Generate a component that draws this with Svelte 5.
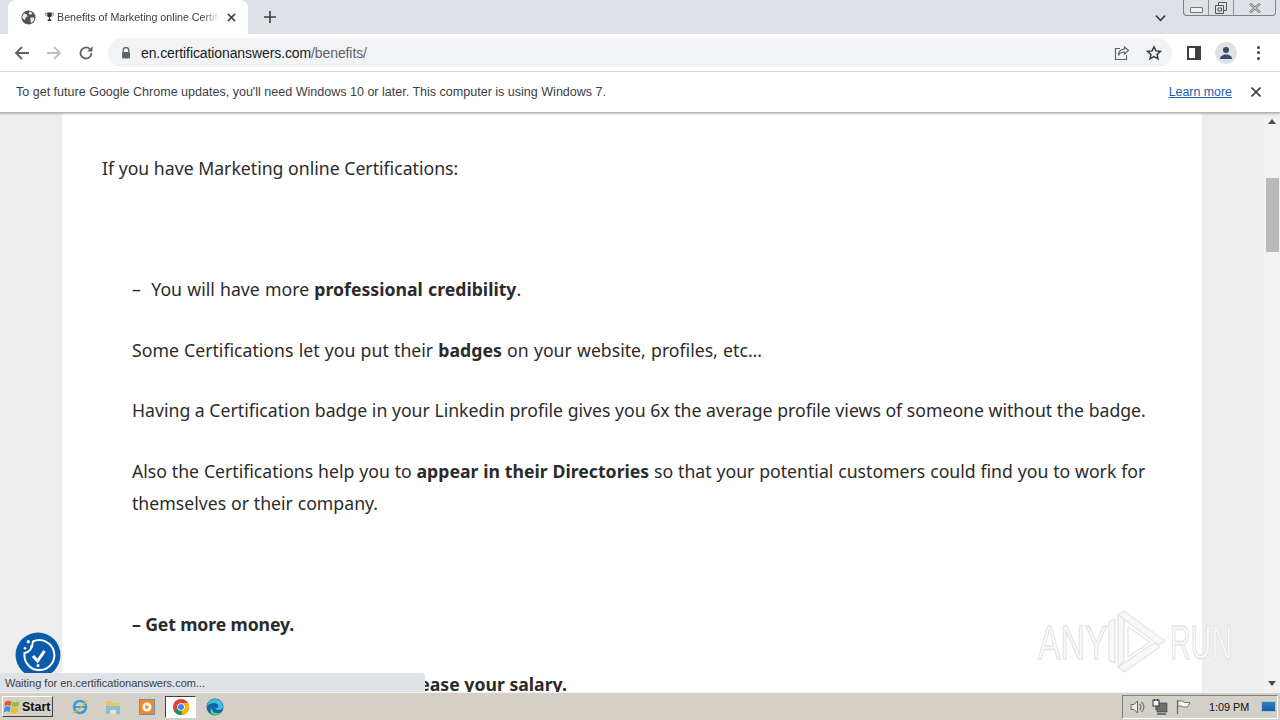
<script>
  const paragraphs = [
    { id: "intro", html: "If you have Marketing online Certifications:" },
    { id: "gap1", html: "&nbsp;" },
    { id: "p1", indent: true, space: "wide", html: "–&nbsp; You will have more <strong>professional credibility</strong>." },
    { id: "p2", indent: true, space: "wide", html: "Some Certifications let you put their <strong>badges</strong> on your website, profiles, etc…" },
    { id: "p3", indent: true, html: "Having a Certification badge in your Linkedin profile gives you 6x the average profile views of someone without the badge." },
    { id: "p4", indent: true, space: "slight", html: "Also the Certifications help you to <strong>appear in their Directories</strong> so that your potential customers could find you to work for themselves or their company." },
    { id: "gap2", html: "&nbsp;" },
    { id: "p5", indent: true, space: "narrow", html: "<strong>– Get more money.</strong>" },
    { id: "p6", indent: true, html: "<strong>Certification can help you to increase your salary.</strong>" },
  ];
</script>

<div class="screen">
  <header class="tabstrip">
    <div class="tab">
      <svg class="globe" viewBox="0 0 16 16" width="15" height="15">
        <circle cx="8" cy="8" r="7.5" fill="#4f5256" />
        <path d="M3 3.5l3 1 1 2.5-2 1-1 3-3-3zM9 1.5l3 1.5-1 2-3-1zM10 8l4 0 0 3-3 3-1-3z" fill="#e9ebef" />
      </svg>
      <svg class="trophy" viewBox="0 0 10 11" width="9" height="10">
        <path d="M2.500.5h5v3.500L6 6H4L2.500 4z" fill="#333" />
        <path d="M2.500 1.500H.5c0 2 1 3 2.500 3M7.500 1.500h2c0 2-1 3-2.500 3" fill="none" stroke="#555" stroke-width=".8" />
        <path d="M4.500 6h1v2h1.500v2H3V8h1.500z" fill="#333" />
      </svg>
      <span class="tab-title">Benefits of Marketing online Certifi</span>
      <svg class="tab-close" viewBox="0 0 10 10" width="9" height="9">
        <path d="M1 1l8 8M9 1l-8 8" stroke="#3c4043" stroke-width="1.7" />
      </svg>
    </div>
    <svg class="newtab" viewBox="0 0 12 12" width="12" height="12">
      <path d="M6 0v12M0 6h12" stroke="#3c4043" stroke-width="1.6" />
    </svg>
    <div class="strip-space"></div>
    <svg class="chevron" viewBox="0 0 12 8" width="11" height="8">
      <path d="M1 1.500l5 5 5-5" fill="none" stroke="#3c4043" stroke-width="1.800" />
    </svg>
    <div class="winctl">
      <div class="winbtn min"><i></i></div>
      <div class="winbtn restore">
        <svg viewBox="0 0 12 12" width="12" height="12">
          <path d="M3.500 3V.5h8v8H9M.5 3.500h8v8h-8zM3 6h3.500v3H3z" fill="none" stroke="#555" />
        </svg>
      </div>
      <div class="winbtn close">
        <svg viewBox="0 0 12 10" width="12" height="10">
          <path d="M1 .5l10 9M11 .5l-10 9" stroke="#777" stroke-width="2.400" />
          <path d="M1 .5l10 9M11 .5l-10 9" stroke="#eef0f3" stroke-width=".8" />
        </svg>
      </div>
    </div>
  </header>

  <nav class="toolbar">
    <svg viewBox="0 0 16 16" width="16" height="16">
      <path d="M15 8H2M8 2L2 8l6 6" fill="none" stroke="#5f6368" stroke-width="1.800" />
    </svg>
    <svg viewBox="0 0 16 16" width="16" height="16">
      <path d="M1 8h13M8 2l6 6-6 6" fill="none" stroke="#bcc0c4" stroke-width="1.800" />
    </svg>
    <svg viewBox="0 0 16 16" width="16" height="16">
      <path d="M13.500 8a5.500 5.500 0 1 1-1.600-3.900" fill="none" stroke="#5f6368" stroke-width="1.800" />
      <path d="M14.500 1.200v5.300H9.200z" fill="#5f6368" />
    </svg>
    <div class="omnibox">
      <svg viewBox="0 0 10 12" width="10" height="12">
        <path d="M2.200 5V3.400a2.800 2.800 0 0 1 5.600 0V5" fill="none" stroke="#5f6368" stroke-width="1.300" />
        <rect x="1" y="5" width="8" height="6.500" rx="1" fill="#5f6368" />
      </svg>
      <span class="url">en.certificationanswers.com<span class="path">/benefits/</span></span>
      <svg class="share" viewBox="0 0 16 16" width="16" height="16">
        <path d="M10.500 2l4 3.500-4 3.500V7C7 7 5.500 8.300 4.500 10.500 4.500 7 6.500 4 10.500 4zM6 3.500H1.500v11h11V10" fill="none" stroke="#5f6368" stroke-width="1.200" />
      </svg>
      <svg viewBox="0 0 16 16" width="16" height="16">
        <path d="M8 1.800l1.900 4.100 4.500.5-3.300 3 .9 4.400L8 11.600l-4 2.200.9-4.400-3.300-3 4.500-.5z" fill="none" stroke="#3c4043" stroke-width="1.500" />
      </svg>
    </div>
    <svg class="sidepanel" viewBox="0 0 14 14" width="14" height="14">
      <path d="M0 0h14v14H0zM2 2v10h6V2z" fill="#3c4043" fill-rule="evenodd" />
    </svg>
    <div class="avatar">
      <svg viewBox="0 0 14 14" width="14" height="14">
        <circle cx="7" cy="4" r="3" fill="#3c4a63" />
        <path d="M1 13c0-3 3-4.500 6-4.500s6 1.500 6 4.500z" fill="#3c4a63" />
      </svg>
    </div>
    <div class="kebab"><i></i><i></i><i></i></div>
  </nav>

  <div class="infobar">
    <span class="info-text">To get future Google Chrome updates, you'll need Windows 10 or later. This computer is using Windows 7.</span>
    <span class="learn">Learn more</span>
    <svg viewBox="0 0 10 10" width="10" height="10">
      <path d="M.5.5l9 9M9.500.5l-9 9" stroke="#3c4043" stroke-width="1.600" />
    </svg>
  </div>

  <main class="viewport">
    <div class="page">
      <article class="card">
        {#each paragraphs as p (p.id)}
          <p class="{p.space ?? ''}" class:indent={p.indent}>{@html p.html}</p>
        {/each}
      </article>
    </div>

    <div class="scrollbar">
      <div class="arrow up"></div>
      <div class="track"><div class="thumb"></div></div>
      <div class="arrow down"></div>
    </div>

    <div class="a11y">
      <svg viewBox="0 0 46 46" width="46" height="46">
        <circle cx="23" cy="23" r="22.500" fill="#0a5cab" />
        <path d="M18 9.500A15 15 0 1 1 9.500 21Q17 20 18 9.500z" fill="none" stroke="#fff" stroke-width="2" />
        <path d="M18 24l4.500 5 7-10" fill="none" stroke="#fff" stroke-width="3" />
        <circle cx="13.300" cy="9.700" r="1.600" fill="#fff" />
        <circle cx="10" cy="16.300" r="1.300" fill="#fff" />
        <circle cx="16" cy="14.700" r="1.100" fill="#fff" />
        <circle cx="23" cy="33.500" r="1.500" fill="#fff" />
      </svg>
    </div>

    <div class="watermark">
      <span class="any">ANY</span>
      <svg viewBox="0 0 58 64" width="58" height="64">
        <g fill="#f8f8f8" stroke="#e6e6e6" stroke-width="1.500" stroke-linejoin="round">
          <path d="M1 12l6-3v44l-6-3z" />
          <path d="M10 5l6-4 41 30-6 4z" />
          <path d="M10 57l6 5 36-25-6-4-36 24z" />
          <path d="M10 5l6 4v42l-6 6z" />
          <path d="M20 17l22 15-22 15z" fill="#fff" />
        </g>
      </svg>
      <span class="run">RUN</span>
    </div>

    <div class="status">Waiting for en.certificationanswers.com...</div>
  </main>

  <footer class="taskbar">
    <div class="start">
      <svg viewBox="0 0 17 15" width="17" height="15">
        <path d="M1 3c2-1.500 4-1.500 6.500-.5L6.500 7C4.500 6 3 6 .5 7.500z" fill="#e2582c" />
        <path d="M8.500 2.500c2.500 1 4.500 1 7 -.5l-1 5c-2.500 1-4.500 1-7 0z" fill="#8cbf3f" />
        <path d="M.5 8.500C3 7 4.500 7 6.500 8l-1 5C3.500 12 2 12-.2 13.500z" fill="#3a96dc" />
        <path d="M7.500 8c2.500 1 4.500 1 7 0l-1 5c-2.500 1.500-4.500 1.500-7 .5z" fill="#f5b81f" />
      </svg>
      <span>Start</span>
    </div>
    <div class="apps">
      <div class="app">
        <svg viewBox="0 0 18 18" width="18" height="18">
          <circle cx="9" cy="9" r="6" fill="none" stroke="#3d9ad6" stroke-width="2.600" />
          <path d="M3 9h12" stroke="#3d9ad6" stroke-width="2" />
          <path d="M2 15C6 14 13 7 16 2" fill="none" stroke="#e8b830" stroke-width="1.300" />
        </svg>
      </div>
      <div class="app">
        <svg viewBox="0 0 18 18" width="18" height="18">
          <path d="M2 3h6l1 2h6v3H2z" fill="#e8c56a" />
          <path d="M2 8h14v8H2z" fill="#8dbcd6" />
          <path d="M6 12h6v4H6z" fill="#e8e4c8" />
        </svg>
      </div>
      <div class="app">
        <svg viewBox="0 0 18 18" width="18" height="18">
          <rect x="1.500" y="1.500" width="15" height="15" fill="#f08a24" stroke="#6a8fb5" />
          <circle cx="9" cy="9" r="4.500" fill="#fff" />
          <path d="M7.500 6.500l4 2.500-4 2.500z" fill="#f08a24" />
        </svg>
      </div>
      <div class="app active">
        <svg viewBox="0 0 18 18" width="18" height="18">
          <circle cx="9" cy="9" r="8" fill="#db4437" />
          <path d="M9 9L2 13a8 8 0 0 0 8 4z" fill="#0f9d58" />
          <path d="M9 5h7a8 8 0 0 1-6 12z" fill="#f4b400" />
          <circle cx="9" cy="9" r="3.800" fill="#fff" />
          <circle cx="9" cy="9" r="3" fill="#4285f4" />
        </svg>
      </div>
      <div class="app">
        <svg viewBox="0 0 18 18" width="18" height="18">
          <circle cx="9" cy="9" r="8.500" fill="#1565a8" />
          <path d="M1 9a8 8 0 0 1 16 0c0 2-2 3-4.500 3-2 0-3-.7-3-1.500 2 0 3-.7 3-2 0-2-2-3.500-4-3.500C5 5 2 6 1 9z" fill="#3fc1d8" />
          <path d="M6 10c0 4 4 7 9 4-2 3-6 4-9 2-2-1.500-2-4 0-6z" fill="#5fd07a" />
        </svg>
      </div>
    </div>
    <div class="tray">
      <svg viewBox="0 0 16 16" width="16" height="16">
        <path d="M2 5.500h3l3.500-3.500v12L5 10.500H2z" fill="#e8e8e8" stroke="#666" />
        <path d="M10.500 5a4 4 0 0 1 0 6M12.500 3a6.500 6.500 0 0 1 0 10" fill="none" stroke="#777" stroke-width="1.200" />
      </svg>
      <svg viewBox="0 0 16 16" width="16" height="16">
        <rect x="5" y="4" width="10" height="9" fill="#6e6e6e" stroke="#333" stroke-width=".6" />
        <rect x="1" y="1" width="6" height="6" fill="#f4f4f4" stroke="#333" />
        <path d="M2.500 0v2M5.500 0v2M4 7v4" stroke="#333" />
        <path d="M5 15h9" stroke="#333" stroke-width="1.200" />
      </svg>
      <svg viewBox="0 0 16 16" width="16" height="16">
        <path d="M2.500 1v14" stroke="#666" stroke-width="1.200" />
        <path d="M3 2h5l1 1.500h6L12.500 8H8L7 7H3z" fill="#f6f6f6" stroke="#777" />
      </svg>
      <span class="clock">1:09 PM</span>
      <div class="show-desktop"></div>
    </div>
  </footer>
</div>

<style>
  :global(body) {
    margin: 0;
    overflow: hidden;
  }

  .screen {
    width: 1280px;
    height: 720px;
    display: flex;
    flex-direction: column;
    font-family: "Liberation Sans", Arial, sans-serif;
    overflow: hidden;
  }

  .tabstrip {
    height: 34px;
    flex: none;
    display: flex;
    align-items: center;
    background: #dee1e6;
    padding-left: 8px;
  }

  .tab {
    width: 240px;
    height: 34px;
    box-sizing: border-box;
    background: #fff;
    border-radius: 8px 8px 0 0;
    display: flex;
    align-items: center;
    padding: 0 7px 0 13px;
  }

  .globe {
    flex: none;
  }

  .trophy {
    flex: none;
    margin: 0 3px 0 9px;
  }

  .tab-title {
    font-size: 10.700px;
    color: #3c4043;
    white-space: nowrap;
    overflow: hidden;
    width: 162px;
    flex: none;
    -webkit-mask-image: linear-gradient(to right, #000 90%, transparent);
    mask-image: linear-gradient(to right, #000 90%, transparent);
  }

  .tab-close {
    margin-left: 8px;
    flex: none;
  }

  .newtab {
    margin-left: 16px;
  }

  .strip-space {
    flex: 1;
  }

  .chevron {
    margin-right: 17px;
    margin-top: 1px;
  }

  .winctl {
    align-self: flex-start;
    width: 93px;
    height: 16px;
    margin-right: 4px;
    box-sizing: border-box;
    border: 1px solid #7d8187;
    border-top: none;
    border-radius: 0 0 4px 4px;
    display: flex;
  }

  .winbtn {
    display: flex;
    align-items: center;
    justify-content: center;
    box-sizing: border-box;
    border-right: 1px solid #8d9196;
  }

  .winbtn.min {
    width: 25px;
  }

  .winbtn.min i {
    display: block;
    width: 11px;
    height: 4px;
    border: 1px solid #777;
    border-radius: 1px;
    background: #eef0f3;
    margin-top: 4px;
  }

  .winbtn.restore {
    width: 25px;
  }

  .winbtn.close {
    flex: 1;
    border-right: none;
  }

  .toolbar {
    height: 38px;
    flex: none;
    box-sizing: border-box;
    background: #fff;
    border-bottom: 1px solid #dadce0;
    display: flex;
    align-items: center;
    gap: 16px;
    padding: 0 14px;
  }

  .omnibox {
    width: 1064px;
    height: 29px;
    margin-left: -2px;
    background: #f1f3f4;
    border-radius: 15px;
    display: flex;
    align-items: center;
    gap: 10px;
    padding: 0 10px 0 13px;
    box-sizing: border-box;
    flex: none;
  }

  .url {
    font-size: 14px;
    color: #202124;
    flex: 1;
    letter-spacing: -0.1px;
  }

  .path {
    color: #5f6368;
  }

  .omnibox .share {
    margin-right: 6px;
  }

  .sidepanel {
    margin-left: -1px;
  }

  .avatar {
    width: 22px;
    height: 22px;
    border-radius: 50%;
    background: #dfe1e7;
    display: flex;
    align-items: center;
    justify-content: center;
    margin-left: -2px;
  }

  .kebab {
    display: flex;
    flex-direction: column;
    gap: 2.500px;
    margin-left: 4px;
  }

  .kebab i {
    display: block;
    width: 3px;
    height: 3px;
    border-radius: 50%;
    background: #3c4043;
  }

  .infobar {
    height: 41px;
    flex: none;
    box-sizing: border-box;
    background: #fff;
    border-bottom: 1px solid #b4b4b4;
    box-shadow: 0 1px 2px rgba(0, 0, 0, 0.25);
    display: flex;
    align-items: center;
    padding: 0 19px 0 16px;
    position: relative;
    z-index: 2;
  }

  .info-text {
    flex: 1;
    font-size: 12.540px;
    color: #3c4043;
  }

  .learn {
    font-size: 12.400px;
    color: #1a5fb4;
    text-decoration: underline;
    margin-right: 19px;
  }

  .viewport {
    flex: 1;
    min-height: 0;
    display: flex;
    position: relative;
    overflow: hidden;
    background: #eeeeee;
  }

  .page {
    flex: 1;
    min-width: 0;
    padding: 0 62px;
  }

  .card {
    background: #fff;
    padding: 39px 40px 0;
    height: 100%;
    box-sizing: border-box;
    font-family: "Noto Sans", sans-serif;
    font-size: 17.670px;
    line-height: 32px;
    color: #2b2b2b;
    overflow: hidden;
  }

  .card p {
    margin: 0 0 28.500px;
  }

  .card p.indent {
    padding-left: 30px;
  }

  .card p.wide {
    word-spacing: 0.650px;
  }

  .card p.slight {
    word-spacing: 0.250px;
  }

  .card p.narrow {
    letter-spacing: -0.120px;
  }

  .scrollbar {
    width: 16px;
    flex: none;
    display: flex;
    flex-direction: column;
    background: #f1f1f1;
  }

  .arrow {
    height: 17px;
    flex: none;
    display: flex;
    align-items: center;
    justify-content: center;
  }

  .arrow::before {
    content: "";
    border-left: 4px solid transparent;
    border-right: 4px solid transparent;
  }

  .arrow.up::before {
    border-bottom: 5px solid #505050;
  }

  .arrow.down::before {
    border-top: 5px solid #505050;
  }

  .track {
    flex: 1;
    padding-top: 48px;
  }

  .thumb {
    height: 74px;
    margin: 0 1px 0 2px;
    background: #b9b9b9;
  }

  .a11y {
    position: absolute;
    left: 15px;
    top: 519px;
    line-height: 0;
  }

  .watermark {
    position: absolute;
    left: 1038px;
    top: 497px;
    display: flex;
    align-items: center;
    font-size: 49px;
    color: #fafafa;
    -webkit-text-stroke: 1.500px #e4e4e4;
  }

  .watermark span {
    display: block;
    transform-origin: left center;
  }

  .watermark .any {
    width: 70px;
    transform: scaleX(0.69);
  }

  .watermark .run {
    width: 64px;
    margin-left: 4px;
    transform: scaleX(0.585);
  }

  .status {
    position: absolute;
    left: 0;
    bottom: 0;
    width: 425px;
    height: 19px;
    box-sizing: border-box;
    background: #dee1e6;
    border-radius: 0 3px 0 0;
    font-size: 11px;
    line-height: 20px;
    color: #3c4043;
    padding-left: 5px;
  }

  .taskbar {
    height: 28px;
    flex: none;
    box-sizing: border-box;
    background: #d4d0c8;
    border-top: 1px solid #f4f2ec;
    display: flex;
    align-items: center;
  }

  .start {
    width: 51px;
    height: 21px;
    margin-left: 2px;
    box-sizing: border-box;
    background: #d4d0c8;
    border: 1px solid;
    border-color: #fff #404040 #404040 #fff;
    display: flex;
    align-items: center;
    gap: 1px;
    padding-left: 1px;
    font-weight: 700;
    font-size: 12.500px;
    color: #111;
  }

  .apps {
    display: flex;
    flex: 1;
    margin-left: 11px;
    gap: 2.750px;
  }

  .app {
    width: 31px;
    height: 22px;
    display: flex;
    align-items: center;
    justify-content: center;
  }

  .app.active {
    background: #fdfdfd;
    box-sizing: border-box;
    border: 1px solid;
    border-color: #404040 #fff #fff #404040;
  }

  .tray {
    width: 156px;
    height: 24px;
    margin-right: 2px;
    box-sizing: border-box;
    border: 1px solid;
    border-color: #808080 #fff #fff #808080;
    display: flex;
    align-items: center;
    gap: 7px;
    padding-left: 6px;
  }

  .clock {
    font-size: 10.800px;
    color: #111;
    margin-left: 11px;
    white-space: nowrap;
  }

  .show-desktop {
    width: 15px;
    height: 11px;
    margin-left: auto;
    margin-right: 1px;
    background: linear-gradient(#2f7fc8, #1c5ea0);
    border: 1px solid #9cc;
    box-sizing: border-box;
  }
</style>
